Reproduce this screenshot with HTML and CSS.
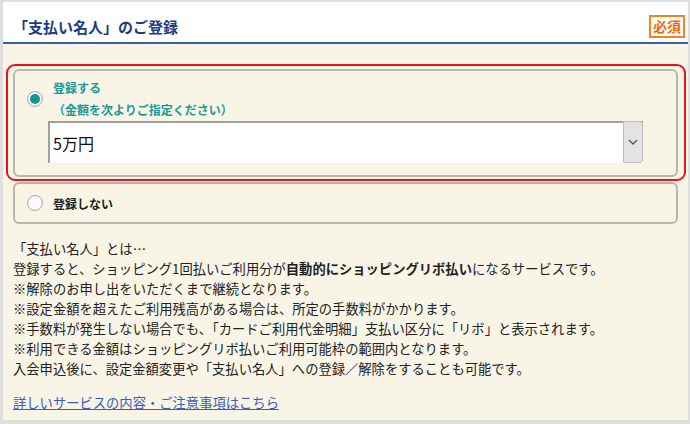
FILE: index.html
```html
<!DOCTYPE html>
<html lang="ja">
<head>
<meta charset="utf-8">
<title>「支払い名人」のご登録</title>
<link rel="stylesheet" href="styles.css">
</head>
<body>
<div class="frame">
  <div class="panel">
    <div class="header">
      <h2 class="title">「支払い名人」のご登録</h2>
      <span class="badge">必須</span>
    </div>
    <div class="content">
      <div class="selected-wrap">
        <div class="opt opt-sel">
          <span class="radio radio-on"><span class="dot"></span></span>
          <div class="label-teal">
            <div>登録する</div>
            <div>（金額を次よりご指定ください）</div>
          </div>
          <div class="select">
            <span class="select-value">5万円</span>
            <span class="select-btn">
              <svg width="10" height="6" viewBox="0 0 10 6"><path d="M1 1 L5 5 L9 1" fill="none" stroke="#555" stroke-width="1.4"/></svg>
            </span>
          </div>
        </div>
      </div>
      <div class="opt opt-off">
        <span class="radio"></span>
        <span class="label-dark">登録しない</span>
      </div>
      <div class="desc">
        <p>「支払い名人」とは…</p>
        <p>登録すると、ショッピング1回払いご利用分が<b>自動的に</b><b>ショッピングリボ払い</b>になるサービスです。</p>
        <p>※解除のお申し出をいただくまで継続となります。</p>
        <p>※設定金額を超えたご利用残高がある場合は、所定の手数料がかかります。</p>
        <p>※手数料が発生しない場合でも、「カードご利用代金明細」支払い区分に「リボ」と表示されます。</p>
        <p>※利用できる金額はショッピングリボ払いご利用可能枠の範囲内となります。</p>
        <p>入会申込後に、設定金額変更や「支払い名人」への登録／解除をすることも可能です。</p>
      </div>
      <a class="link" href="#">詳しいサービスの内容・ご注意事項はこちら</a>
    </div>
  </div>
</div>
</body>
</html>
```

FILE: styles.css
```css
html, body {
  margin: 0;
  padding: 0;
}
body {
  font-family: "Noto Sans CJK JP", "Noto Sans", sans-serif;
  color: #222;
}
.frame {
  width: 690px;
  height: 424px;
  box-sizing: border-box;
  background: #dedede;
  padding: 2px 2px 4px 3px;
}
.panel {
  height: 100%;
  background: #f8f4e6;
  display: flex;
  flex-direction: column;
}
.header {
  height: 42px;
  box-sizing: border-box;
  background: #fff;
  border-bottom: 2px solid #3b5fa6;
  display: flex;
  justify-content: space-between;
  align-items: flex-end;
  padding: 0 3px 4px 10px;
}
.title {
  margin: 0;
  font-size: 15px;
  line-height: 22px;
  font-weight: bold;
  color: #1b3c84;
}
.badge {
  border: 2px solid #f58220;
  background: #fff;
  color: #f26a10;
  font-size: 14px;
  font-weight: bold;
  line-height: 19px;
  padding: 0 2px;
}
.content {
  padding: 20px 2px 0 3px;
}
.selected-wrap {
  border: 2px solid #e8141c;
  border-radius: 9px;
  padding: 3px 6px 2px 5px;
}
.opt {
  border: 2px solid #b9b6ad;
  border-radius: 6px;
  background: #f8f4e6;
}
.opt-sel {
  display: grid;
  grid-template-columns: 16px 1fr;
  column-gap: 5px;
  padding: 6px 33px 12px 12px;
}
.radio {
  width: 16px;
  height: 16px;
  box-sizing: border-box;
  border: 1px solid #a6a6a6;
  border-radius: 50%;
  background: #fbfbfb;
  display: flex;
  align-items: center;
  justify-content: center;
  align-self: center;
}
.radio-on .dot {
  width: 10px;
  height: 10px;
  border-radius: 50%;
  background: #15978f;
}
.label-teal {
  color: #1e9a96;
  font-weight: bold;
  font-size: 12px;
  line-height: 22px;
  padding-left: 5px;
}
.select {
  grid-column: 2;
  height: 42px;
  box-sizing: border-box;
  background: #fff;
  border-top: 2px solid #a0a0a0;
  border-left: 2px solid #a0a0a0;
  display: flex;
  align-items: center;
  justify-content: space-between;
}
.select-value {
  font-size: 16px;
  color: #111;
  padding-left: 3px;
}
.select-btn {
  width: 20px;
  height: 42px;
  margin-top: -2px;
  box-sizing: border-box;
  background: #e3e3e3;
  border: 1px solid #bcbcbc;
  border-radius: 0 3px 3px 0;
  display: flex;
  align-items: center;
  justify-content: center;
}
.opt-off {
  margin: 1px 8px 0 7px;
  height: 42px;
  box-sizing: border-box;
  display: flex;
  align-items: center;
  gap: 10px;
  padding-left: 12px;
}
.label-dark {
  font-size: 12px;
  font-weight: bold;
  color: #222;
}
.desc {
  margin: 15px 0 0 7px;
  font-size: 13.3px;
  line-height: 20px;
  color: #222;
}
.desc p {
  margin: 0;
}
.link {
  display: block;
  margin: 14px 0 0 7px;
  font-size: 13.3px;
  line-height: 20px;
  color: #3a5bc0;
  text-decoration: underline;
}
```
